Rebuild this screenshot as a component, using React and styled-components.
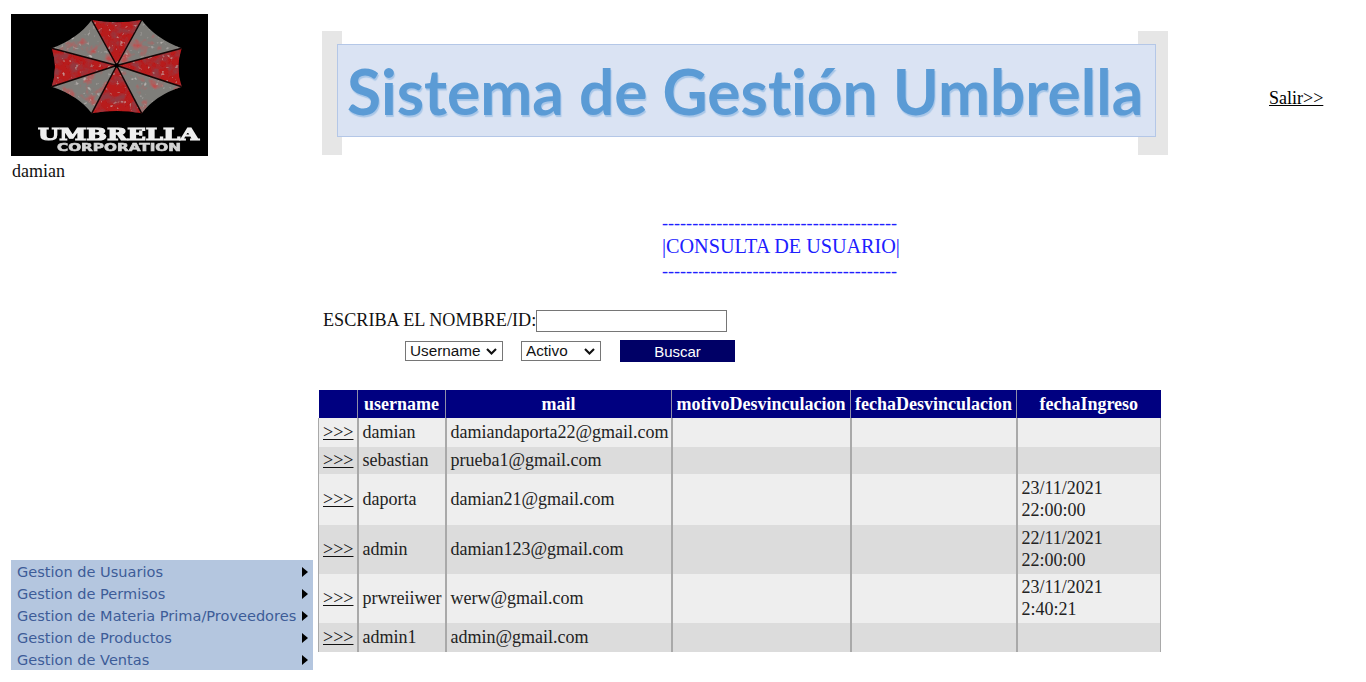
import React from "react";
import styled, { createGlobalStyle } from "styled-components";

const Global = createGlobalStyle`
  html, body { margin: 0; padding: 0; background: #fff; }
  body { font-family: "Liberation Serif", "Times New Roman", serif; font-size: 18px; color: #111; }
`;

const Page = styled.div`
  display: flex;
  align-items: flex-start;
  padding: 14px 0 0 11px;
  height: 682px;
  box-sizing: border-box;
  overflow: hidden;
`;

const Sidebar = styled.aside`
  width: 302px;
  height: 656px;
  flex: none;
  display: flex;
  flex-direction: column;
  justify-content: space-between;
`;

const UserName = styled.div`
  margin: 5px 0 0 1px;
  line-height: 20px;
`;

const LogoBox = styled.div`
  width: 197px;
  height: 142px;
  background: #000;
  svg { display: block; filter: blur(0.7px); }
`;

const Menu = styled.nav`
  background: #b4c6df;
  height: 110px;
  display: flex;
  flex-direction: column;
`;

const MenuItem = styled.div`
  height: 22px;
  flex: 1;
  display: flex;
  align-items: center;
  justify-content: space-between;
  padding: 1px 5px 0 6px;
  font-family: "DejaVu Sans", Verdana, sans-serif;
  font-size: 14.56px;
  color: #3d5c98;
  white-space: nowrap;
`;

const Arrow = styled.span`
  width: 0;
  height: 0;
  border-left: 6px solid #000;
  border-top: 5px solid transparent;
  border-bottom: 5px solid transparent;
`;

const Main = styled.main`
  margin-left: 6px;
  flex: none;
  width: 1047px;
`;

const Header = styled.header`
  display: flex;
  align-items: center;
  padding: 17px 0 0 3px;
`;

const Banner = styled.div`
  width: 846px;
  height: 124px;
  box-sizing: border-box;
  padding: 13px 12px 18px 15px;
  background:
    linear-gradient(#e6e6e6, #e6e6e6) left / 20px 100% no-repeat,
    linear-gradient(#e6e6e6, #e6e6e6) right / 30px 100% no-repeat;
`;

const BannerPanel = styled.div`
  height: 100%;
  box-sizing: border-box;
  background: #dae3f3;
  border: 1px solid #b4c7e7;
  display: flex;
  align-items: center;
  padding-left: 9px;
  font-family: Lato, "Open Sans", sans-serif;
  font-weight: 700;
  font-size: 62.2px;
  font-variant-ligatures: none;
  color: #5b9bd5;
  text-shadow: 1px 2px 1px #a7c6e8;
  white-space: nowrap;
`;

const Exit = styled.a`
  margin-left: 101px;
  color: #000;
  text-decoration: underline;
  position: relative;
  top: 5px;
`;

const TitleBlock = styled.div`
  margin: 57px 0 0 343px;
  color: #2020ff;
  white-space: nowrap;
`;

const DashLine = styled.div`
  line-height: 22px;
  font-size: 18.1px;
`;

const TitleLine = styled.div`
  line-height: 25px;
  font-size: 20.2px;
  margin-bottom: 1px;
`;

const SearchForm = styled.form`
  margin: 28px 0 0 4px;
`;

const SearchLine = styled.div`
  display: flex;
  align-items: center;
  height: 22px;
  font-size: 18.17px;
`;

const SearchLabel = styled.label`
  margin-bottom: 2px;
`;

const SearchInput = styled.input`
  width: 191px;
  height: 22px;
  box-sizing: border-box;
  border: 1px solid #767676;
  margin: 0;
  padding: 0 2px;
  background: #fff;
`;

const FilterLine = styled.div`
  display: flex;
  align-items: center;
  margin: 8px 0 0 82px;
  height: 22px;
`;

const chevron =
  "data:image/svg+xml,%3Csvg xmlns='http://www.w3.org/2000/svg' width='11' height='7' viewBox='0 0 11 7'%3E%3Cpath d='M1 1l4.5 4.5L10 1' fill='none' stroke='%23111' stroke-width='2.1'/%3E%3C/svg%3E";

const Select = styled.select`
  appearance: none;
  height: 20px;
  width: ${(p) => p.$w}px;
  margin-right: ${(p) => p.$gap}px;
  box-sizing: border-box;
  border: 1px solid #767676;
  border-radius: 0;
  padding: 0 0 2px 4px;
  background: #fff url("${chevron}") no-repeat right 5px center;
  font-family: "Liberation Sans", Arial, sans-serif;
  font-size: 15.3px;
  color: #111;
`;

const SearchButton = styled.button`
  width: 115px;
  height: 22px;
  border: 0;
  background: #000066;
  color: #fff;
  font-family: "Liberation Sans", Arial, sans-serif;
  font-size: 15px;
  padding: 0;
`;

const Table = styled.table`
  margin: 28px 0 0 -1px;
  border-collapse: collapse;
  table-layout: fixed;
  width: 842px;
  font-size: 18px;
`;

const Th = styled.th`
  background: #000080;
  color: #fff;
  height: 28px;
  padding: 0;
  font-weight: 700;
  white-space: nowrap;
  border-left: 1px solid #8f8fa8;
  &:first-child { border-left: 0; }
`;

const Row = styled.tr`
  background: ${(p) => (p.$alt ? "#dcdcdc" : "#eeeeee")};
  height: ${(p) => p.$h}px;
`;

const Td = styled.td`
  padding: 0 4px 1px;
  border-left: 2px solid #a9a9a9;
  border-right: 1px solid #a9a9a9;
  color: #222;
  line-height: 22px;
  white-space: nowrap;
  &:first-child { border-left: 1px solid #a9a9a9; }
`;

const RowLink = styled.a`
  color: #111;
  text-decoration: underline;
`;

const rows = [
  { u: "damian", m: "damiandaporta22@gmail.com", h: 29 },
  { u: "sebastian", m: "prueba1@gmail.com", h: 27 },
  { u: "daporta", m: "damian21@gmail.com", d: ["23/11/2021", "22:00:00"], h: 51 },
  { u: "admin", m: "damian123@gmail.com", d: ["22/11/2021", "22:00:00"], h: 49 },
  { u: "prwreiiwer", m: "werw@gmail.com", d: ["23/11/2021", "2:40:21"], h: 49 },
  { u: "admin1", m: "admin@gmail.com", h: 29 },
];

const widths = [39, 88, 226, 179, 166, 144];
const heads = ["", "username", "mail", "motivoDesvinculacion", "fechaDesvinculacion", "fechaIngreso"];
const menu = [
  "Gestion de Usuarios",
  "Gestion de Permisos",
  "Gestion de Materia Prima/Proveedores",
  "Gestion de Productos",
  "Gestion de Ventas",
];

const C = [105.7, 51.5];
const P = [
  [80.7, 6], [130.7, 6], [170.7, 34.3], [170.7, 72.7],
  [130.7, 99.3], [80.7, 99.3], [40.7, 72.7], [40.7, 34.3],
];

function panel(i) {
  const a = P[i];
  const b = P[(i + 1) % 8];
  const mx = (a[0] + b[0]) / 2;
  const my = (a[1] + b[1]) / 2;
  const k = i % 2 === 0 ? 0.1 : 0.14;
  const qx = mx + (C[0] - mx) * k;
  const qy = my + (C[1] - my) * k;
  return `M${C[0]} ${C[1]}L${a[0]} ${a[1]}Q${qx} ${qy} ${b[0]} ${b[1]}Z`;
}

function Stain({ id, seed, freq, color, gain, bias }) {
  return (
    <filter id={id} x="0" y="0" width="100%" height="100%">
      <feTurbulence type="fractalNoise" baseFrequency={freq} numOctaves="3" seed={seed} result="t" />
      <feColorMatrix in="t" values={`0 0 0 0 ${color[0]}  0 0 0 0 ${color[1]}  0 0 0 0 ${color[2]}  ${gain} 0 0 0 ${bias}`} />
      <feComposite in2="SourceGraphic" operator="in" result="n" />
      <feTurbulence type="fractalNoise" baseFrequency="0.22" numOctaves="2" seed={seed + 3} />
      <feColorMatrix values={`0 0 0 0 0.75  0 0 0 0 0.7  0 0 0 0 0.68  0 2.2 0 0 -1.45`} />
      <feComposite in2="SourceGraphic" operator="in" result="s" />
      <feMerge>
        <feMergeNode in="SourceGraphic" />
        <feMergeNode in="n" />
        <feMergeNode in="s" />
      </feMerge>
    </filter>
  );
}

function Logo() {
  return (
    <svg width="197" height="142" viewBox="0 0 197 142">
      <defs>
        <Stain id="redStain" seed={5} freq="0.1" color={[0.3, 0.04, 0.05]} gain="3.2" bias="-1.35" />
        <Stain id="greyStain" seed={11} freq="0.08" color={[0.5, 0.08, 0.08]} gain="3.6" bias="-1.85" />
      </defs>
      <rect width="197" height="142" fill="#000" />
      <g filter="url(#redStain)">
        {P.map((_, i) => (i % 2 === 0 ? <path key={i} d={panel(i)} fill="#b81a1f" /> : null))}
      </g>
      <g filter="url(#greyStain)">
        {P.map((_, i) => (i % 2 === 1 ? <path key={i} d={panel(i)} fill="#7f7e7a" /> : null))}
      </g>
      {P.map((p, i) => (
        <line key={i} x1={C[0]} y1={C[1]} x2={p[0]} y2={p[1]} stroke="#160606" strokeWidth="1.5" />
      ))}
      <circle cx={C[0]} cy={C[1]} r="2.2" fill="#000" />
      <text
        x="27"
        y="125.5"
        textLength="161"
        lengthAdjust="spacingAndGlyphs"
        fontFamily="DejaVu Serif"
        fontWeight="700"
        fontSize="17.5"
        fill="#eeeeee"
        stroke="#eeeeee"
        strokeWidth="1.2"
      >
        UMBRELLA
      </text>
      <text
        x="46"
        y="137"
        textLength="124"
        lengthAdjust="spacingAndGlyphs"
        fontFamily="DejaVu Sans"
        fontWeight="700"
        fontSize="10.5"
        fill="#d4d4d4"
        stroke="#d4d4d4"
        strokeWidth="0.6"
      >
        CORPORATION
      </text>
    </svg>
  );
}

const DASHES = "-".repeat(39);

export default function App() {
  return (
    <>
      <Global />
      <Page>
        <Sidebar>
          <div>
            <LogoBox>
              <Logo />
            </LogoBox>
            <UserName>damian</UserName>
          </div>
          <Menu>
            {menu.map((m) => (
              <MenuItem key={m}>
                {m}
                <Arrow />
              </MenuItem>
            ))}
          </Menu>
        </Sidebar>
        <Main>
          <Header>
            <Banner>
              <BannerPanel>Sistema de Gestión Umbrella</BannerPanel>
            </Banner>
            <Exit href="#">Salir&gt;&gt;</Exit>
          </Header>
          <TitleBlock>
            <DashLine>{DASHES}</DashLine>
            <TitleLine>|CONSULTA DE USUARIO|</TitleLine>
            <DashLine>{DASHES}</DashLine>
          </TitleBlock>
          <SearchForm>
            <SearchLine>
              <SearchLabel>ESCRIBA EL NOMBRE/ID:</SearchLabel>
              <SearchInput />
            </SearchLine>
            <FilterLine>
              <Select $w={98} $gap={18} defaultValue="Username">
                <option>Username</option>
              </Select>
              <Select $w={80} $gap={19} defaultValue="Activo">
                <option>Activo</option>
              </Select>
              <SearchButton type="button">Buscar</SearchButton>
            </FilterLine>
          </SearchForm>
          <Table>
            <colgroup>
              {widths.map((w, i) => (
                <col key={i} width={w} />
              ))}
            </colgroup>
            <thead>
              <tr>
                {heads.map((h, i) => (
                  <Th key={i}>{h}</Th>
                ))}
              </tr>
            </thead>
            <tbody>
              {rows.map((r, i) => (
                <Row key={r.u} $alt={i % 2 === 1} $h={r.h}>
                  <Td>
                    <RowLink href="#">&gt;&gt;&gt;</RowLink>
                  </Td>
                  <Td>{r.u}</Td>
                  <Td>{r.m}</Td>
                  <Td />
                  <Td />
                  <Td>
                    {r.d && (
                      <>
                        {r.d[0]}
                        <br />
                        {r.d[1]}
                      </>
                    )}
                  </Td>
                </Row>
              ))}
            </tbody>
          </Table>
        </Main>
      </Page>
    </>
  );
}
